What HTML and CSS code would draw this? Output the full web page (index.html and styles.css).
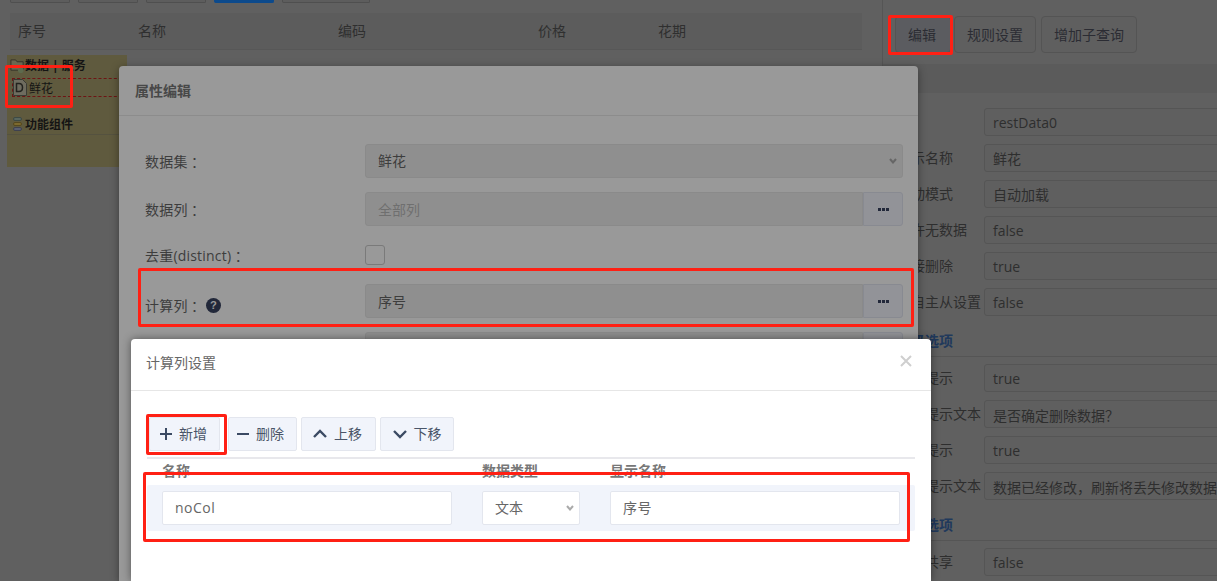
FILE: index.html
```html
<!DOCTYPE html>
<html lang="zh-CN">
<head>
<meta charset="utf-8">
<title>计算列设置</title>
<link rel="stylesheet" href="styles.css">
</head>
<body>
<div class="page">
  <main class="main">
    <div class="top-tools">
      <span class="top-btn"></span><span class="top-btn"></span><span class="top-btn"></span><span class="top-btn top-btn-primary"></span><span class="top-btn top-btn-wide"></span>
    </div>
    <div class="grid-head">
      <span class="col col-no">序号</span><span class="col col-name">名称</span><span class="col col-name">编码</span><span class="col col-price">价格</span><span class="col">花期</span>
    </div>
    <div class="tree">
      <div class="tree-group tree-group-first">
        <svg class="tree-icon tree-icon-folder" viewBox="0 0 16 16"><path d="M1 13V2h5l1.500 2H14v9z" fill="#6b6750" stroke="#35322a"/><circle cx="11.500" cy="13" r="3" fill="#5d6a4d"/></svg>
        <b>数据 | 服务</b>
      </div>
      <div class="tree-leaf">
        <svg class="tree-icon tree-icon-doc" viewBox="0 0 14 17"><path d="M.5.5h9l4 4v12H.5z" fill="#6e6c5f" stroke="#3a3a34"/><path d="M3.500 4.500h2.500c2.500 0 3.500 1.500 3.500 4s-1 4-3.500 4H3.500z" fill="none" stroke="#23231f" stroke-width="1.500"/></svg>
        <span class="tree-leaf-text">鲜花</span>
      </div>
      <div class="tree-group tree-group-second">
        <svg class="tree-icon tree-icon-stack" viewBox="0 0 9 14"><rect x=".5" y=".5" width="8" height="3" rx="1.500" fill="#59675f" stroke="#3d4a45"/><rect x=".5" y="5.500" width="8" height="3" rx="1.500" fill="#7d6a2f" stroke="#55481f"/><rect x=".5" y="10.500" width="8" height="3" rx="1.500" fill="#5a5f70" stroke="#3e4150"/></svg>
        <b>功能组件</b>
      </div>
    </div>
  </main>

  <aside class="side">
    <div class="side-tools">
      <span class="side-btn side-btn-edit">编辑</span><span class="side-btn">规则设置</span><span class="side-btn">增加子查询</span>
    </div>
    <div class="side-band"></div>
    <div class="props">
      <div class="prop"><span class="prop-label">ID</span><span class="prop-field">restData0</span></div>
      <div class="prop"><span class="prop-label">显示名称</span><span class="prop-field">鲜花</span></div>
      <div class="prop"><span class="prop-label">启动模式</span><span class="prop-field">自动加载</span></div>
      <div class="prop"><span class="prop-label">允许无数据</span><span class="prop-field">false</span></div>
      <div class="prop"><span class="prop-label">连接删除</span><span class="prop-field">true</span></div>
      <div class="prop"><span class="prop-label">各自主从设置</span><span class="prop-field">false</span></div>
      <div class="prop-section">高级选项</div>
      <div class="prop"><span class="prop-label">删除提示</span><span class="prop-field">true</span></div>
      <div class="prop"><span class="prop-label">删除提示文本</span><span class="prop-field">是否确定删除数据<span class="fw">？</span></span></div>
      <div class="prop"><span class="prop-label">刷新提示</span><span class="prop-field">true</span></div>
      <div class="prop"><span class="prop-label">刷新提示文本</span><span class="prop-field">数据已经修改<span class="fw">，</span>刷新将丢失修改数据</span></div>
      <div class="prop-section">其他选项</div>
      <div class="prop"><span class="prop-label">是否共享</span><span class="prop-field">false</span></div>
    </div>
  </aside>
</div>

<section class="dialog dialog-attr">
  <h2 class="dialog-attr-title">属性编辑</h2>
  <div class="attr-body">
    <div class="attr-row">
      <span class="attr-label">数据集<span class="fw">：</span></span>
      <select class="attr-select" disabled><option>鲜花</option></select>
    </div>
    <div class="attr-row">
      <span class="attr-label">数据列<span class="fw">：</span></span>
      <span class="attr-field attr-field-muted">全部列</span>
      <span class="more-btn"><i></i><i></i><i></i></span>
    </div>
    <div class="attr-row attr-row-check">
      <span class="attr-label">去重(distinct)<span class="fw">：</span></span>
      <span class="attr-check"></span>
    </div>
    <div class="attr-row">
      <span class="attr-label attr-label-low">计算列<span class="fw">：</span><svg class="help" viewBox="0 0 16 16"><circle cx="8" cy="8" r="8" fill="#22283a"/><text x="8" y="12" text-anchor="middle" class="help-mark">?</text></svg></span>
      <span class="attr-field">序号</span>
      <span class="more-btn"><i></i><i></i><i></i></span>
    </div>
    <div class="attr-row">
      <span class="attr-label"></span>
      <span class="attr-field"></span>
      <span class="more-btn"></span>
    </div>
  </div>
</section>

<section class="dialog dialog-calc">
  <header class="calc-head">
    <h2 class="calc-title">计算列设置</h2>
    <svg class="calc-close" viewBox="0 0 12 12"><path d="M1 1l10 10M11 1L1 11" stroke="#cfcfcf" stroke-width="2" fill="none"/></svg>
  </header>
  <div class="calc-body">
    <div class="calc-tools">
      <span class="tool-btn tool-add"><svg class="tool-icon" viewBox="0 0 12 12"><path d="M6 0v12M0 6h12" stroke="#3b4a63" stroke-width="2"/></svg>新增</span>
      <span class="tool-btn tool-del"><svg class="tool-icon" viewBox="0 0 12 12"><path d="M0 6h12" stroke="#3b4a63" stroke-width="2"/></svg>删除</span>
      <span class="tool-btn tool-up"><svg class="tool-icon tool-icon-wide" viewBox="0 0 14 10"><path d="M1 8l6-6 6 6" stroke="#3b4a63" stroke-width="2.400" fill="none"/></svg>上移</span>
      <span class="tool-btn tool-down"><svg class="tool-icon tool-icon-wide" viewBox="0 0 14 10"><path d="M1 2l6 6 6-6" stroke="#3b4a63" stroke-width="2.400" fill="none"/></svg>下移</span>
    </div>
    <div class="calc-cols">
      <span class="calc-col calc-col-name">名称</span><span class="calc-col calc-col-type">数据类型</span><span class="calc-col">显示名称</span>
    </div>
    <div class="calc-row">
      <span class="calc-input calc-input-name">noCol</span>
      <select class="calc-select"><option>文本</option></select>
      <span class="calc-input calc-input-label">序号</span>
    </div>
  </div>
</section>

<div class="mark mark-tree"></div>
<div class="mark mark-edit"></div>
<div class="mark mark-attr"></div>
<div class="mark mark-add"></div>
<div class="mark mark-row"></div>
</body>
</html>
```
FILE: styles.css
```css
* { box-sizing: border-box; }
html, body { margin: 0; height: 581px; overflow: hidden; }
body {
  position: relative;
  background: #606060;
  font: 14px/20px "Open Sans", "Noto Sans CJK SC", sans-serif;
  color: #2c2c2c;
}
h2 { margin: 0; font-size: 14px; }
.fw { font-family: "Noto Sans CJK TC", sans-serif; }
.page { display: flex; height: 581px; }
.main { width: 882px; flex: none; padding-left: 10px; }
.top-tools { display: flex; gap: 8px; height: 3px; overflow: hidden; align-items: flex-end; }
.top-btn { width: 60px; height: 3px; flex: none; background: #5d5d5d; border: 1px solid #4f4f4f; border-top: 0; border-radius: 0 0 2px 2px; }
.top-btn-primary { background: #0c4a8c; border-color: #0c4a8c; }
.top-btn-wide { width: 88px; }
.grid-head {
  display: flex; align-items: center; height: 37px; margin: 10px 20px 0 0;
  padding-left: 8px; background: #5c5c5c; border-bottom: 1px solid #575757;
  color: #2f2f2f;
}
.col { flex: none; }
.col-no { width: 120px; }
.col-name { width: 200px; }
.col-price { width: 120px; }
.tree { width: 120px; height: 112px; margin: 5px 0 0 -3px; background: #5f5a3e; color: #141414; }
.tree-group { display: flex; align-items: center; height: 20px; font-size: 12px; }
.tree-group b { font-weight: 700; padding-top: 2px; }
.tree-group-first { padding-left: 3px; }
.tree-icon { flex: none; }
.tree-icon-folder { width: 15px; height: 15px; }
.tree-icon-doc { width: 14px; height: 17px; }
.tree-icon-stack { width: 9px; height: 14px; margin-right: 3px; }
.tree-leaf {
  display: flex; align-items: center; gap: 3px; height: 19px; margin: 3px 0 0 5px;
  border: 1px dashed #6e1414; border-right: 0;
  font-size: 12px;
}
.tree-leaf-text { padding-top: 3px; margin-left: -1px; }
.tree-group-second { margin-top: 17px; height: 21px; padding-left: 6px; border-bottom: 1px solid #55523f; }
.side { width: 335px; flex: none; border-left: 1px solid #555; padding: 16px 0 0 0; }
.side-tools { display: flex; gap: 5px; padding-left: 12px; }
.side-btn {
  height: 37px; padding: 1px 12px 0; display: flex; align-items: center; flex: none;
  background: #5f5f5f; border: 1px solid #545454; border-radius: 4px; color: #2b2c33;
}
.side-btn-edit { width: 56px; margin-right: -2px; background: #5b5c60; }
.side-band { height: 29px; margin-top: 11px; background: #5b5b5b; }
.props { padding: 15px 0 0 14px; width: 420px; }
.prop { display: flex; align-items: center; height: 28px; margin-bottom: 8px; }
.prop-label { width: 87px; flex: none; color: #2e2e2e; }
.prop-field {
  flex: 1; height: 28px; line-height: 28px; padding: 0 8px; border: 1px solid #555; border-radius: 3px;
  background: #5f5f5f; color: #2e2e2e; white-space: nowrap; overflow: hidden;
}
.prop-section {
  height: 33px; margin-bottom: 7px; line-height: 34px;
  border-bottom: 1px solid #555; color: #20395c; font-weight: 700;
}
.dialog { position: absolute; overflow: hidden; }
.dialog-attr {
  left: 119px; top: 66px; width: 799px; height: 515px; background: #999;
  border-radius: 4px 4px 0 0; box-shadow: 0 2px 8px rgba(0, 0, 0, .4);
}
.dialog-attr-title { height: 50px; padding-left: 16px; line-height: 49px; border-bottom: 1px solid #8c8c8c; color: #484848; font-weight: 700; }
.attr-body { padding: 28px 15px 0 26px; display: flex; flex-direction: column; gap: 14px; }
.attr-row { display: flex; align-items: center; height: 34px; }
.attr-row-check { height: 30px; }
.attr-label { width: 220px; flex: none; padding-top: 2px; color: #3d3d3d; letter-spacing: .2px; display: flex; align-items: center; }
.attr-label-low { padding-top: 9px; }
.help { width: 15px; height: 15px; margin-left: 4px; }
.help-mark { font: 700 12px "Liberation Sans", sans-serif; fill: #999; }
.attr-select {
  flex: 1; height: 34px; padding: 0 12px; font: inherit; color: #3d3d3d; opacity: 1; appearance: none;
  background: #8f8f8f url("data:image/svg+xml,%3Csvg xmlns='http://www.w3.org/2000/svg' width='8' height='6'%3E%3Cpath d='M1 1l3 3.500 3-3.500' fill='none' stroke='%23666' stroke-width='2'/%3E%3C/svg%3E") no-repeat right 5px center;
  border: 1px solid #8a8a8a; border-radius: 3px;
}
.attr-field {
  flex: 1; height: 34px; line-height: 34px; padding: 0 12px; background: #8f8f8f;
  border: 1px solid #8a8a8a; border-radius: 3px 0 0 3px; color: #3d3d3d;
}
.attr-field-muted { color: #6f6f6f; }
.more-btn {
  width: 40px; height: 34px; flex: none; display: flex; align-items: center; justify-content: center; gap: 1px;
  background: #929398; border: 1px solid #888a91; border-radius: 0 3px 3px 0;
}
.more-btn i { width: 3px; height: 3px; background: #22283a; }
.attr-check { width: 20px; height: 20px; background: #999; border: 1px solid #7a7a7a; border-radius: 3px; }
.dialog-calc {
  left: 131px; top: 339px; width: 800px; height: 242px; background: #fff;
  border-radius: 4px 4px 0 0; box-shadow: 0 0 8px rgba(0, 0, 0, .45); color: #666;
}
.calc-head { display: flex; align-items: center; justify-content: space-between; height: 52px; padding: 0 19px 3px 15px; border-bottom: 1px solid #e6e6e6; }
.calc-title { font-weight: 400; color: #666; }
.calc-close { width: 12px; height: 12px; margin-bottom: 4px; }
.calc-body { padding: 26px 16px 0; }
.calc-tools { display: flex; gap: 5px; padding-left: 2px; height: 42px; border-bottom: 2px solid #e8e8ec; }
.tool-btn {
  height: 34px; display: flex; align-items: center; justify-content: center; gap: 7px; flex: none;
  background: #f1f4fb; border: 1px solid #e3e6ee; border-radius: 2px; color: #4a5568;
}
.tool-add { width: 71px; margin-right: 3px; padding-right: 2px; }
.tool-del { width: 69px; padding-right: 4px; }
.tool-up { width: 75px; margin-left: -1px; padding-right: 2px; }
.tool-down { width: 74px; margin-left: -1px; }
.tool-icon { width: 12px; height: 12px; }
.tool-icon-wide { width: 14px; height: 10px; }
.calc-cols { display: flex; height: 26px; padding: 2px 0 0 15px; color: #777; font-weight: 700; line-height: 20px; }
.calc-col-name { width: 320px; }
.calc-col-type { width: 128px; }
.calc-row {
  display: flex; align-items: center; height: 46px; padding-left: 15px; background: #f1f4fb; border-radius: 2px;
}
.calc-input {
  height: 34px; line-height: 32px; padding: 0 12px; background: #fff; border: 1px solid #e3e6ee; border-radius: 2px;
  color: #666; letter-spacing: .5px;
}
.calc-input-name { width: 290px; margin-right: 30px; }
.calc-input-label { width: 290px; }
.calc-select {
  width: 98px; height: 34px; margin-right: 30px; padding: 0 12px; font: inherit; color: #666; appearance: none;
  background: #fff url("data:image/svg+xml,%3Csvg xmlns='http://www.w3.org/2000/svg' width='8' height='6'%3E%3Cpath d='M1 1l3 3.500 3-3.500' fill='none' stroke='%23aaa' stroke-width='2'/%3E%3C/svg%3E") no-repeat right 5px center;
  border: 1px solid #e3e6ee; border-radius: 2px;
}
.mark { position: absolute; border: 3px solid #ff2014; border-radius: 2px; pointer-events: none; }
.mark-tree { left: 5px; top: 65px; width: 68px; height: 43px; }
.mark-edit { left: 888px; top: 15px; width: 65px; height: 40px; }
.mark-attr { left: 138px; top: 268px; width: 776px; height: 59px; }
.mark-add { left: 146px; top: 414px; width: 81px; height: 41px; }
.mark-row { left: 143px; top: 472px; width: 767px; height: 70px; }
```
